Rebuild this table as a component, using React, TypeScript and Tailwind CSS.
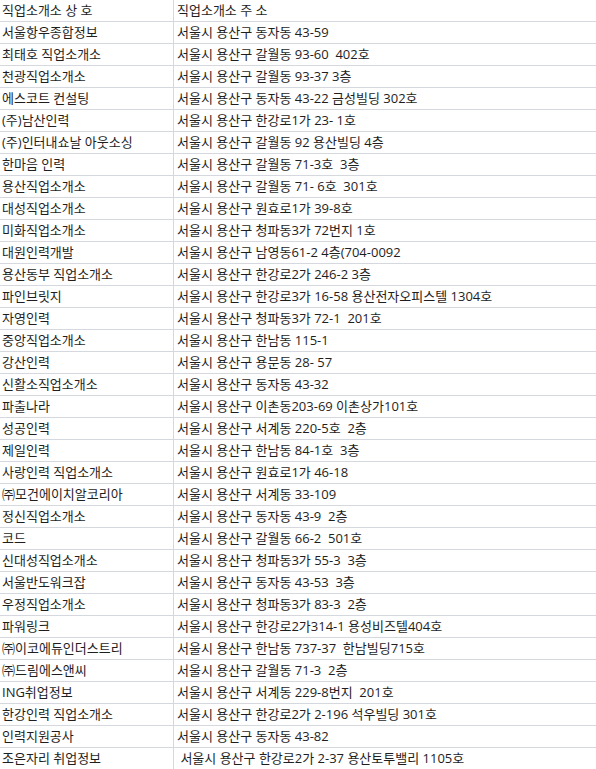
const rows: [string, string][] = [
  ["서울항우종합정보", "서울시 용산구 동자동 43-59"],
  ["최태호 직업소개소", "서울시 용산구 갈월동 93-60  402호"],
  ["천광직업소개소", "서울시 용산구 갈월동 93-37 3층"],
  ["에스코트 컨설팅", "서울시 용산구 동자동 43-22 금성빌딩 302호"],
  ["(주)남산인력", "서울시 용산구 한강로1가 23- 1호"],
  ["(주)인터내쇼날 아웃소싱", "서울시 용산구 갈월동 92 용산빌딩 4층"],
  ["한마음 인력", "서울시 용산구 갈월동 71-3호  3층"],
  ["용산직업소개소", "서울시 용산구 갈월동 71- 6호  301호"],
  ["대성직업소개소", "서울시 용산구 원효로1가 39-8호"],
  ["미화직업소개소", "서울시 용산구 청파동3가 72번지 1호"],
  ["대원인력개발", "서울시 용산구 남영동61-2 4층(704-0092"],
  ["용산동부 직업소개소", "서울시 용산구 한강로2가 246-2 3층"],
  ["파인브릿지", "서울시 용산구 한강로3가 16-58 용산전자오피스텔 1304호"],
  ["자영인력", "서울시 용산구 청파동3가 72-1  201호"],
  ["중앙직업소개소", "서울시 용산구 한남동 115-1"],
  ["강산인력", "서울시 용산구 용문동 28- 57"],
  ["신활소직업소개소", "서울시 용산구 동자동 43-32"],
  ["파출나라", "서울시 용산구 이촌동203-69 이촌상가101호"],
  ["성공인력", "서울시 용산구 서계동 220-5호  2층"],
  ["제일인력", "서울시 용산구 한남동 84-1호  3층"],
  ["사랑인력 직업소개소", "서울시 용산구 원효로1가 46-18"],
  ["㈜모건에이치알코리아", "서울시 용산구 서계동 33-109"],
  ["정신직업소개소", "서울시 용산구 동자동 43-9  2층"],
  ["코드", "서울시 용산구 갈월동 66-2  501호"],
  ["신대성직업소개소", "서울시 용산구 청파동3가 55-3  3층"],
  ["서울반도워크잡", "서울시 용산구 동자동 43-53  3층"],
  ["우정직업소개소", "서울시 용산구 청파동3가 83-3  2층"],
  ["파워링크", "서울시 용산구 한강로2가314-1 용성비즈텔404호"],
  ["㈜이코에듀인더스트리", "서울시 용산구 한남동 737-37  한남빌딩715호"],
  ["㈜드림에스앤씨", "서울시 용산구 갈월동 71-3  2층"],
  ["ING취업정보", "서울시 용산구 서계동 229-8번지  201호"],
  ["한강인력 직업소개소", "서울시 용산구 한강로2가 2-196 석우빌딩 301호"],
  ["인력지원공사", "서울시 용산구 동자동 43-82"],
  ["조은자리 취업정보", " 서울시 용산구 한강로2가 2-37 용산토투밸리 1105호"],
];

function Row({ name, addr }: { name: string; addr: string }) {
  return (
    <div className="flex h-[22px] border-b border-[#d5d8de]">
      <div className="w-[174px] shrink-0 border-r border-[#d5d8de] pl-[2px] leading-[21px]">
        {name}
      </div>
      <div className="pl-[3px] leading-[21px] whitespace-pre">{addr}</div>
    </div>
  );
}

export default function App() {
  return (
    <div
      className="w-[596px] h-[769px] overflow-hidden bg-white text-[13px] text-[#1e1e1e]"
      style={{ fontFamily: '"Open Sans", "Noto Sans CJK KR", sans-serif' }}
    >
      <Row name="직업소개소 상 호" addr="직업소개소 주 소" />
      {rows.map(([n, a], i) => (
        <Row key={i} name={n} addr={a} />
      ))}
    </div>
  );
}
